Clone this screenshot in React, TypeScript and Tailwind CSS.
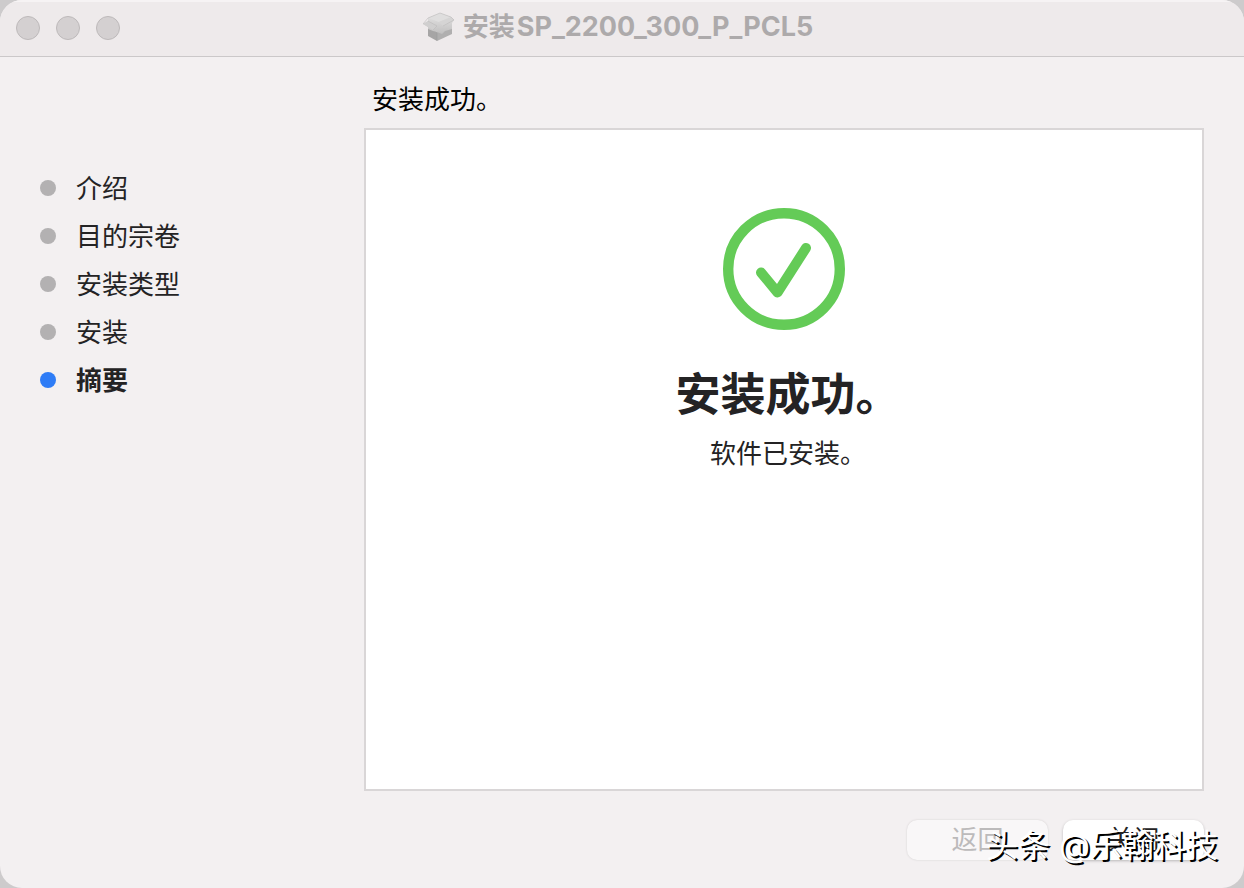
const steps = [
  { label: "介绍", current: false },
  { label: "目的宗卷", current: false },
  { label: "安装类型", current: false },
  { label: "安装", current: false },
  { label: "摘要", current: true },
];

function TrafficLights() {
  const names = ["关闭窗口", "最小化", "缩放"];
  return (
    <div className="flex flex-1 gap-4">
      {names.map((name) => (
        <button
          key={name}
          type="button"
          aria-label={name}
          className="size-6 rounded-full border border-[#bdb9ba] bg-[#d4d0d1]"
        />
      ))}
    </div>
  );
}

function PackageIcon() {
  return (
    <svg width="32" height="30" viewBox="0 0 32 30" aria-hidden="true">
      <defs>
        <linearGradient id="lid" x1="0" y1="0" x2="0" y2="1">
          <stop offset="0" stopColor="#e6e5e5" />
          <stop offset="1" stopColor="#c0bfbf" />
        </linearGradient>
      </defs>
      <path d="M5 13 L14 20 L14 29 L5 24 Z" fill="#a6a5a5" />
      <path d="M14 20 L29 14 L29 22 L14 29 Z" fill="#b0afaf" />
      <path d="M5 6 L17 1 L28 5 L31 8 L29 11 L29 17 L22 19 L19 22 L14 20 L10 19 L5 17 L5 15 L0 12 L5 9 Z" fill="url(#lid)" />
      <path d="M5 9 L0 12 L10 18 L14 14 Z" fill="#d0cfcf" />
      <path d="M5 6 L17 1 L28 5 L16 10 Z" fill="#dfdede" />
      <path d="M28 5 L31 8 L20 14 L16 10 Z" fill="#d5d4d4" />
      <path d="M5 6 L0 12 M5 9 L14 14 L10 18 M28 5 L31 8 L20 14 M5 6 L17 1 L28 5" fill="none" stroke="#bcbbbb" strokeWidth="0.6" />
      <path d="M14 21 V28.500" stroke="#9c9b9b" strokeWidth="0.6" />
    </svg>
  );
}

function SuccessIcon() {
  return (
    <svg width="122" height="122" viewBox="0 0 122 122" fill="none" stroke="#64cb57" aria-hidden="true">
      <circle cx="61" cy="61" r="55.8" strokeWidth="10.4" />
      <path d="M38 64.5 L54.5 84.5 L83 40" strokeWidth="10" strokeLinecap="round" strokeLinejoin="round" />
    </svg>
  );
}

export default function App() {
  return (
    <div className="flex min-h-screen bg-[#cdcbcc] font-['Inter','Noto_Sans_CJK_SC',sans-serif] text-[26px] leading-8 text-[#242324]">
      <div className="relative flex flex-1 flex-col overflow-hidden rounded-[22px] bg-[#f3f0f1]">
        <header className="flex h-[57px] items-center border-b border-[#cbc8c9] bg-[#eeeaeb] px-4 shadow-[inset_0_2px_0_#f6f3f4]">
          <TrafficLights />
          <div className="flex items-center gap-2 pb-0.5 text-[#adaaab]">
            <PackageIcon />
            <h1 className="flex items-baseline gap-0.5 font-bold">
              <span>安装</span>
              <span className="text-[27px]">SP_2200_300_P_PCL5</span>
            </h1>
          </div>
          <div className="flex-1 pr-2" />
        </header>

        <div className="flex flex-1 pr-10 pb-7">
          <nav aria-label="安装步骤" className="w-[364px] shrink-0 pt-[107px] pl-10">
            <ol>
              {steps.map((step) => (
                <li
                  key={step.label}
                  aria-current={step.current ? "step" : undefined}
                  className={step.current ? "flex h-12 items-center gap-5 font-bold" : "flex h-12 items-center gap-5"}
                >
                  <span className={step.current ? "size-4 rounded-full bg-[#2e7cf6]" : "size-4 rounded-full bg-[#b3b1b2]"} />
                  <span className="pt-0.5">{step.label}</span>
                </li>
              ))}
            </ol>
          </nav>

          <main className="flex flex-1 flex-col">
            <p className="px-2 pt-[27px] pb-3 text-black">安装成功。</p>
            <section className="flex flex-1 flex-col items-center border-2 border-[#d9d6d7] bg-white pt-[78px]">
              <SuccessIcon />
              <div className="flex flex-col items-center gap-3.5 pt-9 pl-2">
                <h2 className="text-[45px] leading-[58px] font-bold">安装成功。</h2>
                <p>软件已安装。</p>
              </div>
            </section>
            <div className="mt-[29px] flex justify-end gap-[15px]">
              <button
                type="button"
                disabled
                className="h-10 w-[141px] rounded-[10px] bg-[#f9f7f8] text-[#bcbabb] shadow-[0_0_2px_#cfcccd]"
              >
                返回
              </button>
              <button
                type="button"
                className="h-10 w-[141px] rounded-[10px] bg-white text-[#242324] shadow-[0_1px_3px_#b9b6b7]"
              >
                关闭
              </button>
            </div>
          </main>
        </div>

        <p className="pointer-events-none absolute right-[26px] bottom-[22px] text-[32px] leading-10 whitespace-nowrap text-white [text-shadow:2px_2px_0_#000]">
          头条 @乐翰科技
        </p>
      </div>
    </div>
  );
}
